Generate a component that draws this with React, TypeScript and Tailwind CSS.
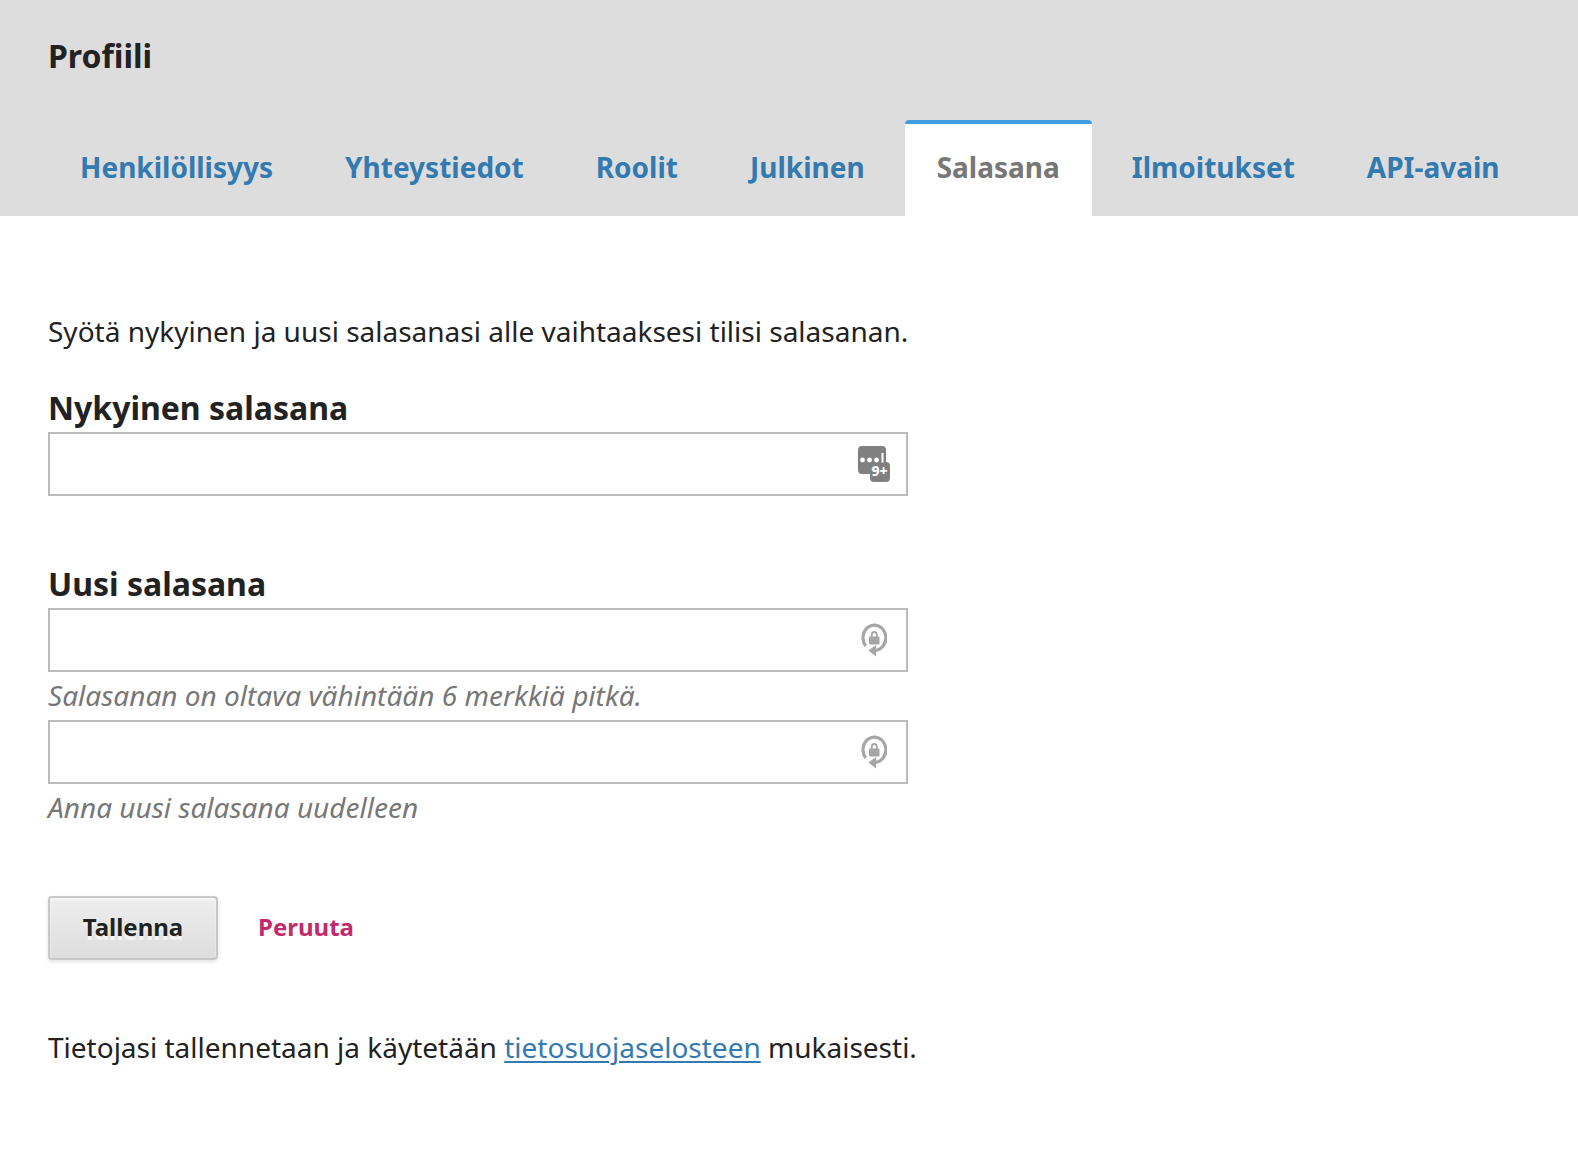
import type { ReactNode } from "react";

const tabs = [
  "Henkilöllisyys",
  "Yhteystiedot",
  "Roolit",
  "Julkinen",
  "Salasana",
  "Ilmoitukset",
  "API-avain",
];

function ManagerIcon() {
  return (
    <svg width="32" height="36" viewBox="0 0 32 36" aria-hidden="true">
      <rect x="0" y="0" width="28" height="28" rx="4" fill="#808080" />
      <rect x="12" y="16" width="20" height="20" rx="4" fill="#808080" />
      <g fill="#fff">
        <circle cx="4.5" cy="14" r="2.4" />
        <circle cx="11.5" cy="14" r="2.4" />
        <circle cx="18.5" cy="14" r="2.4" />
        <rect x="23.5" y="7" width="2" height="9.5" />
      </g>
      <text x="13.5" y="30" fontSize="14" fontWeight="800" fontFamily="Noto Sans, sans-serif" fill="#fff">
        9+
      </text>
    </svg>
  );
}

function GenerateIcon() {
  return (
    <svg width="26" height="34" viewBox="0 0 26 34" aria-hidden="true">
      <path
        d="M4.800 23A11.400 12.600 0 1 1 14 27.300"
        fill="none"
        stroke="#a6a6a6"
        strokeWidth="3.200"
      />
      <path d="M7.500 27.500L15 22v11.500z" fill="#a6a6a6" />
      <rect x="8" y="13.500" width="10.500" height="8" rx="1" fill="#a6a6a6" />
      <path d="M10.800 14v-2.200a2.500 2.800 0 0 1 5 0v2.200" fill="none" stroke="#a6a6a6" strokeWidth="1.800" />
    </svg>
  );
}

type PasswordInputProps = { id: string; icon: ReactNode; label?: string; hint?: string };

function PasswordInput({ id, icon, label, hint }: PasswordInputProps) {
  return (
    <div className="relative">
      <input
        id={id}
        type="password"
        aria-label={label}
        aria-describedby={hint}
        className="block h-16 w-full border-2 border-[#bbb] bg-white px-4 pr-16 text-[28px] outline-none"
      />
      <span className="pointer-events-none absolute inset-y-0 right-0 flex w-[68px] items-center justify-center">
        {icon}
      </span>
    </div>
  );
}

export default function App() {
  return (
    <div className="bg-white font-['Noto_Sans',sans-serif] text-[28px] leading-[46px] text-[#222]">
      <header className="bg-[#ddd] px-12 pt-8">
        <h1 className="text-[32px] font-bold leading-[48px]">Profiili</h1>
        <nav className="mt-10 flex gap-2 whitespace-nowrap">
          {tabs.map((tab) =>
            tab === "Salasana" ? (
              <a
                key={tab}
                href="#"
                aria-current="page"
                className="h-24 rounded-t-sm border-t-4 border-[#449de0] bg-white px-8 pt-5 font-bold text-[#777]"
              >
                {tab}
              </a>
            ) : (
              <a key={tab} href="#" className="h-24 px-8 pt-6 font-bold text-[#337ab0]">
                {tab}
              </a>
            ),
          )}
        </nav>
      </header>

      <main className="px-12 pt-[92px] pb-[84px]">
        <form onSubmit={(e) => e.preventDefault()}>
          <p>Syötä nykyinen ja uusi salasanasi alle vaihtaaksesi tilisi salasanan.</p>

          <div className="mt-[30px] max-w-[860px]">
            <label htmlFor="current" className="block text-[32px] font-bold leading-[48px]">
              Nykyinen salasana
            </label>
            <PasswordInput id="current" icon={<ManagerIcon />} />
          </div>

          <div className="mt-16 max-w-[860px]">
            <label htmlFor="new" className="block text-[32px] font-bold leading-[48px]">
              Uusi salasana
            </label>
            <PasswordInput id="new" icon={<GenerateIcon />} hint="new-hint" />
            <p id="new-hint" className="pb-0.5 italic text-[#777]">
              Salasanan on oltava vähintään 6 merkkiä pitkä.
            </p>
            <PasswordInput id="repeat" icon={<GenerateIcon />} label="Anna uusi salasana uudelleen" />
            <p className="pb-0.5 italic text-[#777]">Anna uusi salasana uudelleen</p>
          </div>

          <div className="mt-16 flex items-center gap-10">
            <button
              type="submit"
              className="h-16 min-w-[170px] rounded border-2 border-[#c8c8c8] bg-linear-to-b from-[#eee] to-[#ddd] px-8 pb-0.5 text-2xl font-bold shadow-[inset_0_2px_2px_#f6f6f6,0_2px_4px_#e4e4e4] [text-shadow:0_4px_0_#f4f4f4]"
            >
              Tallenna
            </button>
            <a href="#" className="pb-0.5 text-2xl font-bold text-[#c12a6b]">
              Peruuta
            </a>
          </div>
        </form>

        <p className="mt-16">
          Tietojasi tallennetaan ja käytetään{" "}
          <a href="#" className="text-[#337ab0] underline decoration-2 underline-offset-3">
            tietosuojaselosteen
          </a>{" "}
          mukaisesti.
        </p>
      </main>
    </div>
  );
}
